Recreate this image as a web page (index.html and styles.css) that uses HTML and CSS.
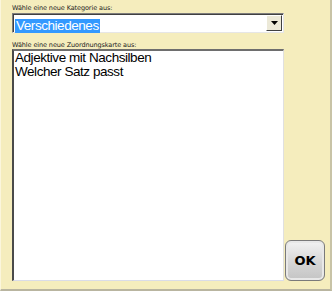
FILE: index.html
```html
<!DOCTYPE html>
<html lang="de">
<head>
  <meta charset="UTF-8">
  <title>Zuordnungskarte</title>
  <link rel="stylesheet" href="styles.css">
</head>
<body>
  <div class="dialog">
    <div class="main">
      <label class="caption">Wähle eine neue Kategorie aus:</label>
      <div class="combo">
        <span class="combo-text"><span class="selected">Verschiedenes</span></span>
        <span class="combo-btn">
          <svg width="7" height="4" viewBox="0 0 7 4"><path d="M0 0h7L3.5 4z" fill="#000"/></svg>
        </span>
      </div>
      <label class="caption second">Wähle eine neue Zuordnungskarte aus:</label>
      <ul class="list">
        <li>Adjektive mit Nachsilben</li>
        <li>Welcher Satz passt</li>
      </ul>
    </div>
    <div class="side">
      <button type="button" class="ok">OK</button>
    </div>
  </div>
</body>
</html>
```

FILE: styles.css
```css
html, body {
  margin: 0;
  height: 100%;
}
body {
  background: #f5edbd;
  font-family: "Liberation Sans", Arial, sans-serif;
}
.dialog {
  box-sizing: border-box;
  width: 332px;
  height: 291px;
  display: flex;
  border-left: 1px solid #fbf6dc;
  border-right: 2px solid #c8c3a6;
  border-bottom: 2px solid #b9b5a0;
  padding: 4px 0 8px 11px;
}
.main {
  width: 272px;
  display: flex;
  flex-direction: column;
}
.caption {
  font-family: "DejaVu Sans", sans-serif;
  font-size: 6.5px;
  color: #222;
  height: 9px;
  line-height: 9px;
  letter-spacing: -0.1px;
}
.caption.second {
  margin-top: 8px;
  height: 8px;
}
.combo {
  box-sizing: border-box;
  height: 20px;
  display: flex;
  background: #fff;
  border-top: 1px solid #7d7d7d;
  border-left: 1px solid #7d7d7d;
  border-right: 1px solid #e6e6e6;
  border-bottom: 1px solid #e6e6e6;
  box-shadow: inset 1px 1px 0 #404040;
}
.combo-text {
  flex: 1;
  padding: 2px 0 0 2px;
}
.selected {
  background: #3399ff;
  color: #fff;
  font-size: 13.5px;
  letter-spacing: -0.45px;
  line-height: 14px;
  display: inline-block;
  padding: 0 1px;
}
.combo-btn {
  width: 14px;
  margin: 1px 1px 1px 0;
  background: #ece9d8;
  border-left: 1px solid #fff;
  border-top: 1px solid #fff;
  border-right: 1px solid #404040;
  border-bottom: 1px solid #404040;
  display: flex;
  align-items: center;
  justify-content: center;
}
.list {
  flex: 1;
  margin: 0;
  padding: 0 0 0 1px;
  list-style: none;
  background: #fff;
  border-top: 2px solid #6e6e6e;
  border-left: 2px solid #4a4a4a;
  border-right: 1px solid #e0e0e0;
  border-bottom: 1px solid #dadce8;
}
.list li {
  font-size: 13.5px;
  letter-spacing: -0.45px;
  line-height: 14px;
  color: #000;
}
.side {
  flex: 1;
  display: flex;
  align-items: flex-end;
  justify-content: flex-start;
  padding-left: 1px;
}
.ok {
  width: 40px;
  height: 41px;
  margin-bottom: 0;
  border: 1px solid #7a7a7a;
  border-radius: 6px;
  background: linear-gradient(#f3f3f3, #d6d6d6 55%, #c4c4c4);
  box-shadow: inset 0 0 0 2px #e8e8e8;
  font-family: "DejaVu Sans", sans-serif;
  font-weight: bold;
  font-size: 13px;
  color: #000;
  padding: 0;
}
```
